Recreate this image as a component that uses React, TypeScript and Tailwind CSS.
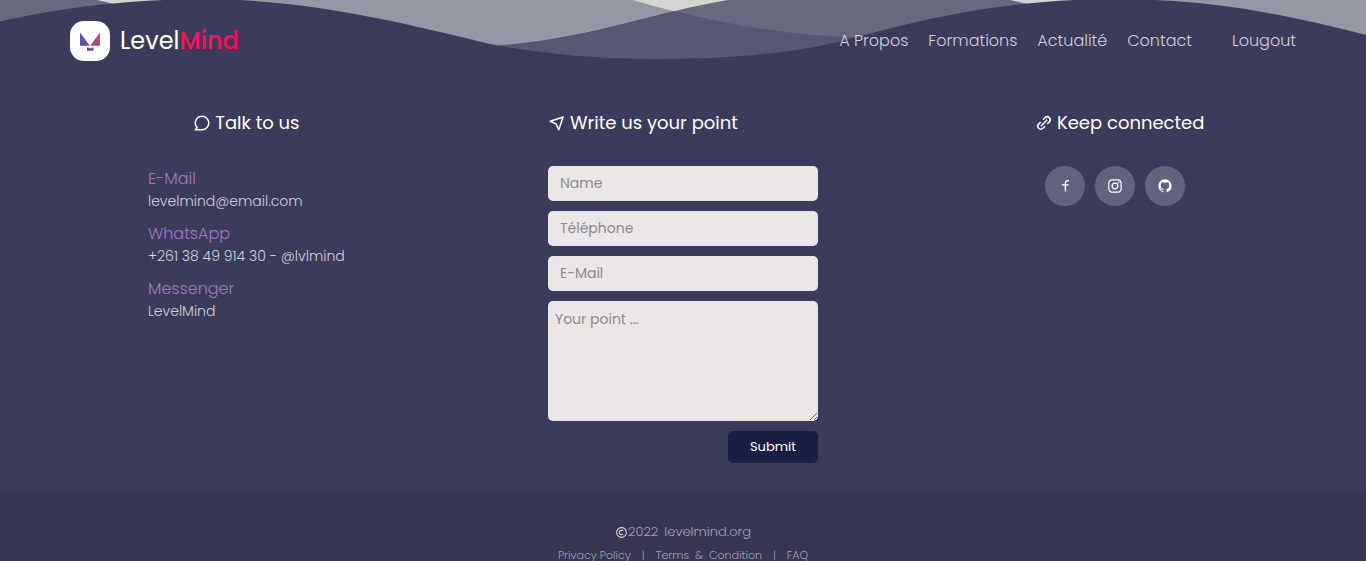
import React from "react";
import {
  BiCopyright,
  BiLinkAlt,
  BiLogoGithub,
  BiLogoInstagram,
  BiNavigation,
} from "react-icons/bi";

const navLinks = ["A Propos", "Formations", "Actualité", "Contact"];

const contacts = [
  { label: "E-Mail", value: "levelmind@email.com" },
  { label: "WhatsApp", value: "+261 38 49 914 30 - @lvlmind" },
  { label: "Messenger", value: "LevelMind" },
];

const fields = [
  { id: "name", label: "Name", type: "text" },
  { id: "phone", label: "Téléphone", type: "tel" },
  { id: "email", label: "E-Mail", type: "email" },
];

const socials = [
  { name: "Facebook", icon: <FacebookIcon /> },
  { name: "Instagram", icon: <BiLogoInstagram className="size-[18px]" /> },
  { name: "GitHub", icon: <BiLogoGithub className="size-4" /> },
];

function FacebookIcon() {
  return (
    <svg
      className="size-4"
      viewBox="0 0 16 16"
      fill="none"
      stroke="currentColor"
      strokeWidth="1.4"
      aria-hidden="true"
    >
      <path d="M12 2.600H10.700C9.200 2.600 8.400 3.500 8.400 5V13.600M5 6.900H11.600" />
    </svg>
  );
}

function CommentIcon() {
  return (
    <svg className="size-[18px]" viewBox="0 0 24 24" fill="currentColor" aria-hidden="true">
      <path d="M12,2A10,10,0,0,0,2,12a9.890,9.890,0,0,0,2.260,6.330l-2,2a1,1,0,0,0-.21,1.090A1,1,0,0,0,3,22h9A10,10,0,0,0,12,2Zm0,18H5.410l.93-.93a1,1,0,0,0,0-1.410A8,8,0,1,1,12,20Z" />
    </svg>
  );
}

function Waves() {
  return (
    <svg
      className="absolute inset-x-0 top-0 h-15 w-full"
      viewBox="0 0 1366 60"
      preserveAspectRatio="none"
      aria-hidden="true"
    >
      <rect width="1366" height="60" fill="#d3d4d3" />
      <path
        d="M200 0H633C700 20 780 36 850 37.5V60H200ZM1110 0H1366V60H1110Z"
        fill="#9597a3"
      />
      <path
        d="M0 0H97L118 5V60H0ZM498 45.500C590 39 650 13 728 0H1010L1032 5V60H498Z"
        fill="#68697e"
      />
      <path
        d="M498 45.500C570 40 620 24 675 11C740 28 800 36 860 37.500V60H498Z"
        fill="#565771"
      />
      <path
        d="M0 21.500C60 8 120 0 200 -1C320 -1 420 28 500 46C555 55 600 59 660 59C740 59 800 52 850 39C920 20 1000 0 1110 -1C1210 -1 1280 13 1366 35V60H0Z"
        fill="#3b3c5b"
      />
    </svg>
  );
}

function LogoMark() {
  return (
    <svg className="size-10" viewBox="0 0 40 40" aria-hidden="true">
      <defs>
        <linearGradient id="mark" x1="10" y1="24" x2="30" y2="14" gradientUnits="userSpaceOnUse">
          <stop offset="0" stopColor="#4450c4" />
          <stop offset="0.5" stopColor="#8a4a9e" />
          <stop offset="1" stopColor="#e8434c" />
        </linearGradient>
      </defs>
      <rect width="40" height="40" rx="14" fill="#fff" />
      <path d="M10 11.500L19.800 24.800H10ZM30 11.500L20.200 24.800H30Z" fill="url(#mark)" />
      <path d="M17 26.500H18.500L19.200 27.500L20 26.500L21 27.500L22 26.500H23.500V29.800H17Z" fill="#6d4aa6" />
    </svg>
  );
}

function Heading({ icon, children }: { icon: React.ReactNode; children: React.ReactNode }) {
  return (
    <h2 className="flex items-center gap-1 text-lg leading-7 text-white">
      {icon}
      {children}
    </h2>
  );
}

export default function App() {
  return (
    <div className="relative flex min-h-screen flex-col bg-[#3b3c5b] font-['Poppins','Inter',sans-serif] text-[#d0d0d8]">
      <Waves />
      <header className="relative flex h-[82px] items-center justify-between px-[70px]">
        <a href="#" className="flex items-center gap-2.5">
          <LogoMark />
          <span className="text-2xl text-white">
            Level<span className="font-medium text-[#fb1056]">Mind</span>
          </span>
        </a>
        <nav className="flex items-center gap-10 font-light">
          <ul className="flex gap-5">
            {navLinks.map((link) => (
              <li key={link}>
                <a href="#">{link}</a>
              </li>
            ))}
          </ul>
          <a href="#">Lougout</a>
        </nav>
      </header>

      <main className="grid grid-cols-3 px-7 pt-[27px] pb-[30px]">
        <section className="flex flex-col items-center gap-[30px]">
          <Heading icon={<CommentIcon />}>Talk to us</Heading>
          <dl className="flex flex-col gap-2.5 font-light">
            {contacts.map(({ label, value }) => (
              <div key={label}>
                <dt className="leading-6 text-[#a276c4]">{label}</dt>
                <dd className="text-sm leading-[21px]">{value}</dd>
              </div>
            ))}
          </dl>
        </section>

        <section className="flex flex-col items-center">
          <form className="flex w-[270px] flex-col gap-[29px]" onSubmit={(e) => e.preventDefault()}>
            <Heading icon={<BiNavigation className="size-[18px]" />}>Write us your point</Heading>
            <div className="flex flex-col gap-2.5">
              {fields.map(({ id, label, type }) => (
                <input
                  key={id}
                  id={id}
                  type={type}
                  aria-label={label}
                  placeholder={label}
                  className="h-[35px] rounded-[5px] bg-[#ebe7e6] px-3 text-sm text-gray-800 placeholder:text-[#8b8a8d]"
                />
              ))}
              <textarea
                aria-label="Your point"
                placeholder="Your point ..."
                className="h-[120px] resize rounded-[5px] bg-[#ebe7e6] px-[7px] py-2 text-sm text-gray-800 placeholder:text-[#8b8a8d]"
              />
              <button
                type="submit"
                className="h-8 w-[90px] self-end rounded-[5px] bg-[#191f45] text-[13px] text-white"
              >
                Submit
              </button>
            </div>
          </form>
        </section>

        <section className="flex flex-col items-center gap-[29px]">
          <Heading icon={<BiLinkAlt className="size-[18px]" />}>Keep connected</Heading>
          <ul className="flex gap-2.5 pr-2.5">
            {socials.map(({ name, icon }) => (
              <li key={name}>
                <a
                  href="#"
                  aria-label={name}
                  className="flex size-10 items-center justify-center rounded-full bg-[#62637c] text-white"
                >
                  {icon}
                </a>
              </li>
            ))}
          </ul>
        </section>
      </main>

      <footer className="flex flex-1 flex-col items-center bg-[#373751] pt-[27px] font-light text-[#a2a2ae]">
        <p className="flex items-center text-[13px] leading-6">
          <BiCopyright className="size-[13px] text-[#d0d0d8]" stroke="currentColor" />
          <span className="pr-1.5">2022</span>
          <span>levelmind.org</span>
        </p>
        <ul className="flex gap-[11px] pt-[3px] text-[11px] leading-4">
          <li>
            <a href="#">Privacy Policy</a>
          </li>
          <li aria-hidden="true">|</li>
          <li>
            <a href="#" className="flex gap-1.5">
              <span>Terms</span>
              <span>&amp;</span>
              <span>Condition</span>
            </a>
          </li>
          <li aria-hidden="true">|</li>
          <li>
            <a href="#">FAQ</a>
          </li>
        </ul>
      </footer>
    </div>
  );
}
